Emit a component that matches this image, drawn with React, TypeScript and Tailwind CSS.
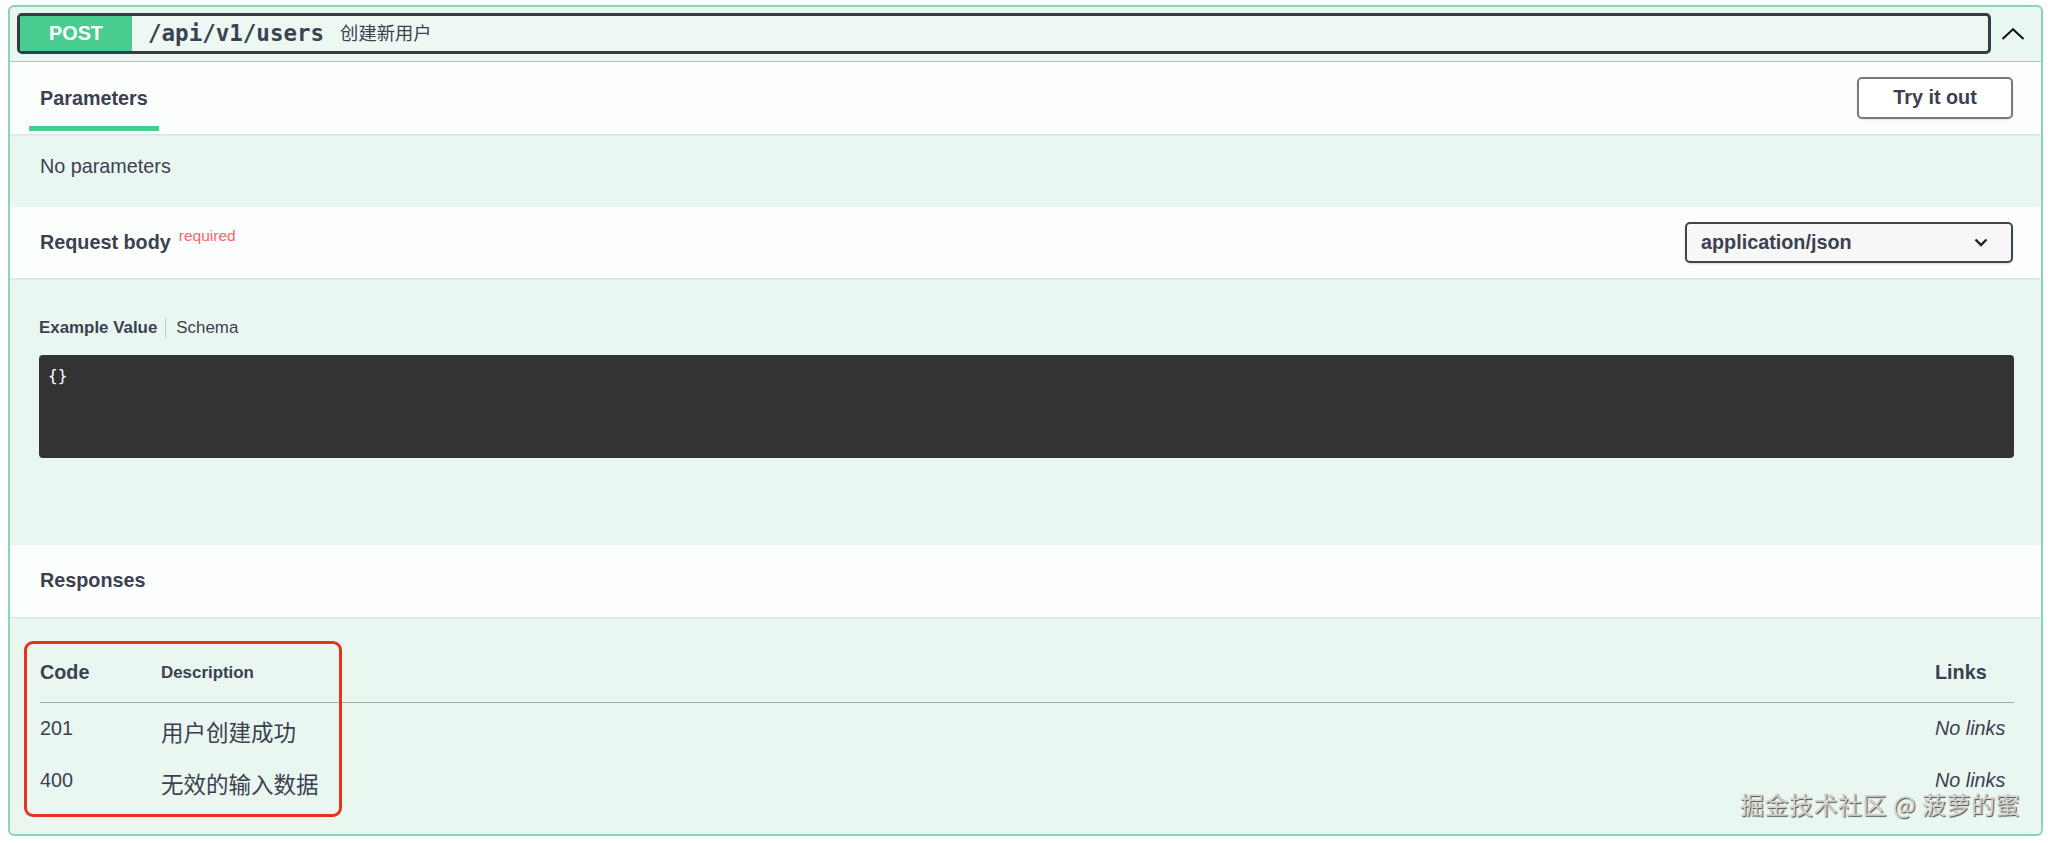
import React from "react";

const sans = "font-['Liberation_Sans','Noto_Sans_CJK_SC',Arial,sans-serif]";

export default function App() {
  return (
    <div className={`relative w-[2048px] h-[843px] bg-white pt-[5px] pl-[8px] pr-[5px] text-[#3b4151] ${sans}`}>
      <div className="h-[831px] border-2 border-[#86d8b2] rounded-[6px] bg-[#eaf7f0] overflow-hidden flex flex-col">
        {/* Summary */}
        <div className="h-[55px] shrink-0 flex items-start pt-[6px] pl-[7px] border-b border-[#8fdab7]">
          <div className="flex-1 h-[41px] flex items-center border-[3px] border-[#363b46] rounded-[5px] overflow-hidden bg-[#edf8f2]">
            <div className="w-[112px] h-full bg-[#49cc90] flex items-center justify-center text-white font-bold text-[19.8px]">
              POST
            </div>
            <span className="ml-[16px] font-['DejaVu_Sans_Mono',monospace] font-bold text-[22.5px] leading-none text-[#3b4151]">
              /api/v1/users
            </span>
            <span className="ml-[16px] text-[18.3px] text-[#3b4151]">创建新用户</span>
          </div>
          <div className="w-[50px] h-[41px] flex items-center pl-[10px]">
            <svg width="24" height="12" viewBox="0 0 24 12" fill="none">
              <path d="M1.5 11 L12 1.2 L22.5 11" stroke="#111" strokeWidth="2" strokeLinejoin="miter" />
            </svg>
          </div>
        </div>

        {/* Parameters tab */}
        <div className="relative z-10 h-[72px] shrink-0 flex items-start justify-between pl-[19px] pr-[28px] bg-[#fcfefd] shadow-[0_1px_2px_rgba(0,0,0,0.1)]">
          <div className="mt-[25px] px-[11px] pb-[16px] border-b-[5px] border-[#49cc90] text-[19.8px] leading-[23px] font-bold">
            Parameters
          </div>
          <button className="mt-[15px] w-[156px] h-[42px] border-2 border-[#7a7a7a] rounded-[5px] bg-white text-[19.8px] font-bold text-[#3b4151] shadow-[0_1px_2px_rgba(0,0,0,0.1)]">
            Try it out
          </button>
        </div>

        {/* No parameters */}
        <div className="h-[73px] shrink-0 pt-[21px] pl-[30px] text-[19.8px] leading-[23px]">No parameters</div>

        {/* Request body */}
        <div className="relative z-10 h-[71px] shrink-0 flex items-center justify-between pl-[30px] pr-[28px] bg-[#fcfefd] shadow-[0_1px_2px_rgba(0,0,0,0.1)]">
          <div className="flex items-start">
            <span className="text-[19.8px] font-bold leading-[23px]">Request body</span>
            <span className="ml-[8px] -mt-[4px] text-[15.5px] leading-[18px] text-[#f26767]">required</span>
          </div>
          <div className="w-[328px] h-[41px] flex items-center justify-between pl-[14px] pr-[23px] border-2 border-[#41444e] rounded-[5px] bg-[#f7f7f7] shadow-[0_1px_2px_rgba(0,0,0,0.15)]">
            <span className="text-[19.8px] font-bold">application/json</span>
            <svg width="14" height="9" viewBox="0 0 14 9" fill="none">
              <path d="M1.5 1.5 L7 7 L12.5 1.5" stroke="#222" strokeWidth="2.4" />
            </svg>
          </div>
        </div>

        {/* Body */}
        <div className="h-[267px] shrink-0 pt-[40px] pl-[29px] pr-[27px]">
          <div className="h-[20px] flex items-center text-[16.9px] leading-[20px]">
            <span className="font-bold">Example Value</span>
            <span className="ml-[8px] w-px h-[20px] bg-[#c3c8cc]" />
            <span className="ml-[10px]">Schema</span>
          </div>
          <div className="mt-[17px] h-[103px] bg-[#333333] rounded-[4px] pt-[11px] pl-[9px] font-['DejaVu_Sans_Mono',monospace] text-[16px] leading-[20px] text-white">
            {"{}"}
          </div>
        </div>

        {/* Responses header */}
        <div className="relative z-10 h-[72px] shrink-0 flex items-center pl-[30px] bg-[#fcfefd] shadow-[0_1px_2px_rgba(0,0,0,0.1)]">
          <span className="text-[19.8px] font-bold">Responses</span>
        </div>

        {/* Responses table */}
        <div className="flex-1 pt-[44px] pl-[30px] pr-[27px]">
          <div className="flex items-center h-[23px] mb-[18px]">
            <div className="w-[121px] text-[19.8px] font-bold">Code</div>
            <div className="flex-1 text-[16.9px] font-bold">Description</div>
            <div className="w-[79px] text-[19.8px] font-bold">Links</div>
          </div>
          <div className="border-t border-[#a3aca9]" />
          <div className="pt-[14px]">
            {[
              ["201", "用户创建成功"],
              ["400", "无效的输入数据"],
            ].map(([code, desc]) => (
              <div key={code} className="flex items-start h-[52px]">
                <div className="w-[121px] text-[19.8px] leading-[23px]">{code}</div>
                <div className="flex-1 text-[22.5px] leading-[33px]">{desc}</div>
                <div className="w-[79px] text-[19.8px] leading-[23px] italic">No links</div>
              </div>
            ))}
          </div>
        </div>
      </div>

      {/* Red annotation box */}
      <div className="absolute left-[24px] top-[641px] w-[318px] h-[176px] border-[3px] border-[#e8331c] rounded-[9px] pointer-events-none" />

      {/* Watermark */}
      <div className="absolute left-[1740px] top-[790px] text-[24px] leading-[28px] tracking-[0.5px] text-[#d2d2d2] font-['Noto_Sans_CJK_SC',sans-serif] [text-shadow:1px_1px_1px_#4a4a4a]">
        掘金技术社区 @ 菠萝的蜜
      </div>
    </div>
  );
}
